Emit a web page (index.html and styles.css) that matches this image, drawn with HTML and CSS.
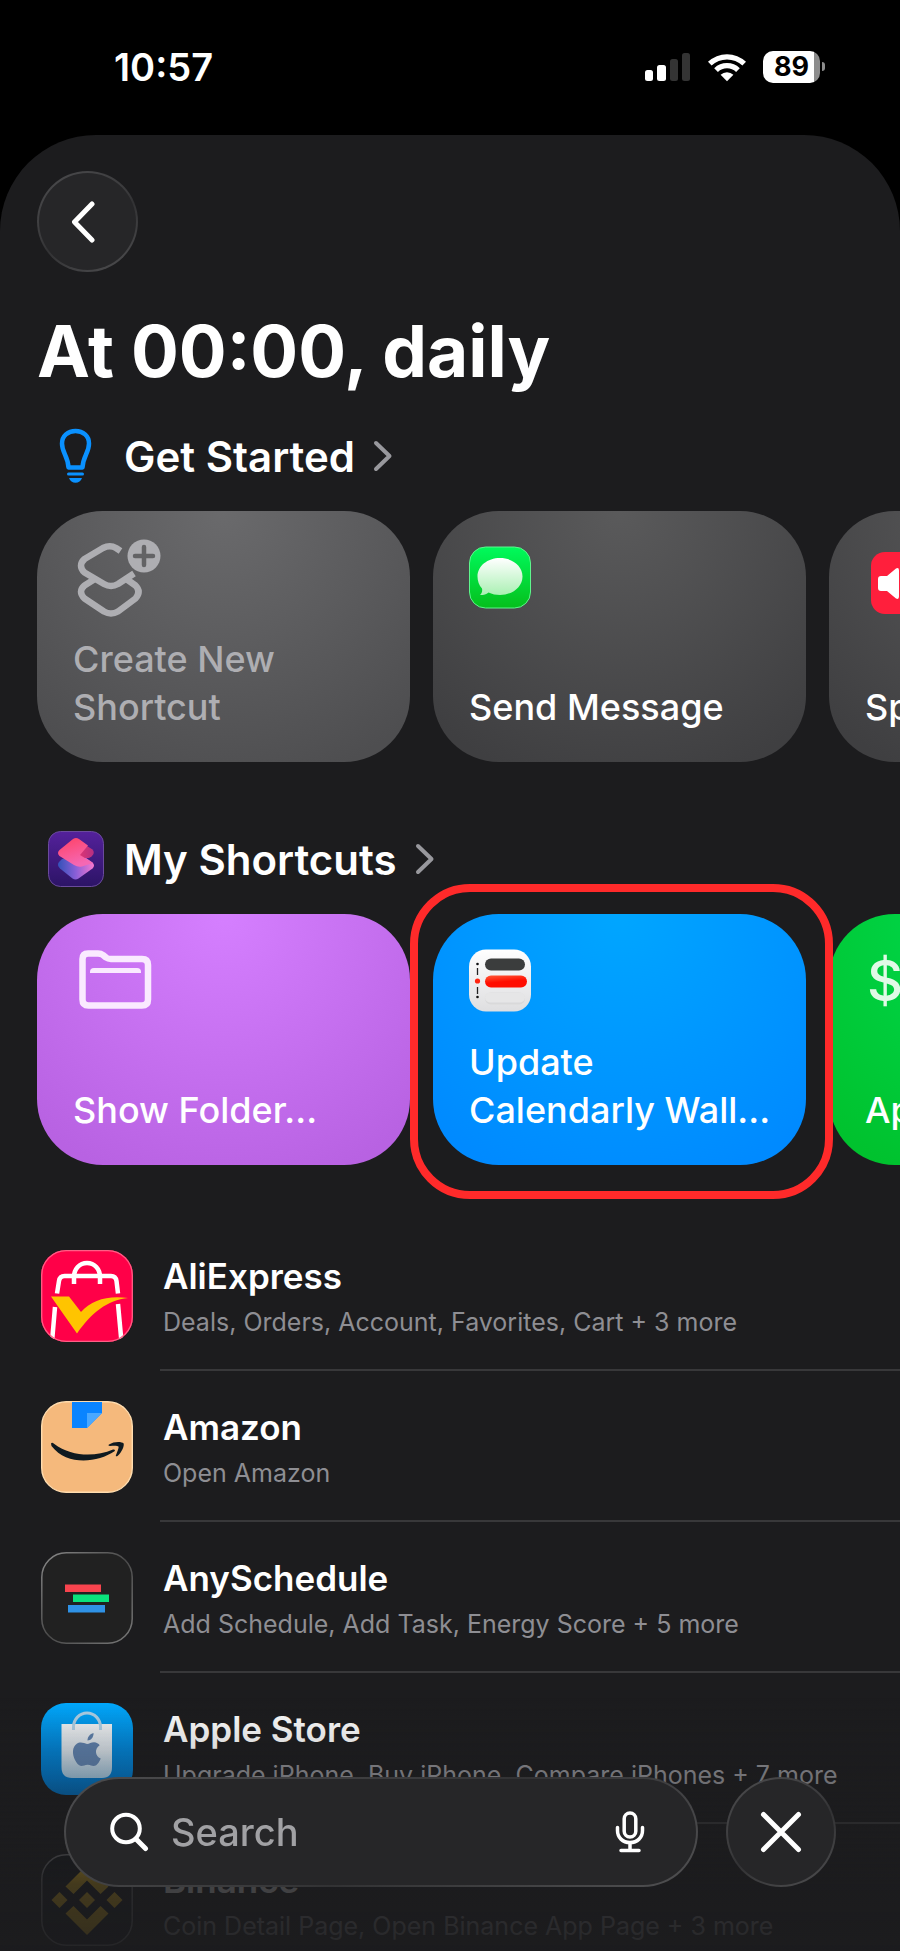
FILE: index.html
```html
<!DOCTYPE html>
<html lang="en">
<head>
<meta charset="utf-8">
<meta name="viewport" content="width=device-width, initial-scale=1">
<title>At 00:00, daily</title>
<link rel="stylesheet" href="styles.css">
</head>
<body>
<div class="phone">
  <header class="status">
    <time class="status-time">10:57</time>
    <div class="status-icons">
      <svg class="signal" width="46" height="30" viewBox="0 0 46 30" aria-hidden="true">
        <rect x="0" y="18" width="8" height="11" rx="2.5" fill="#fff"/>
        <rect x="12" y="13" width="9" height="16" rx="2.5" fill="#fff"/>
        <rect x="25" y="7" width="8" height="22" rx="2.5" fill="#343434"/>
        <rect x="37" y="1" width="8" height="28" rx="2.5" fill="#343434"/>
      </svg>
      <svg class="wifi" width="40" height="30" viewBox="0 0 40 30" aria-hidden="true">
        <path d="M1 9.8a27.4 27.4 0 0 1 38 0l-3.6 3.8a22.2 22.2 0 0 0-30.800 0z" fill="#fff"/>
        <path d="M7.200 16.200a18.600 18.600 0 0 1 25.600 0l-3.700 3.800a13.200 13.200 0 0 0-18.200 0z" fill="#fff"/>
        <path d="M13.600 22.700a9.400 9.400 0 0 1 12.800 0L20 29.300z" fill="#fff"/>
      </svg>
      <div class="battery"><span class="battery-level">89</span></div>
    </div>
  </header>

  <main class="sheet">
    <button class="glass round back" type="button" aria-label="Back">
      <svg width="26" height="42" viewBox="0 0 26 42" aria-hidden="true"><path d="M22 3 4.500 21 22 39" fill="none" stroke="#fff" stroke-width="5" stroke-linecap="round" stroke-linejoin="round"/></svg>
    </button>
    <h1 class="title">At 00:00, daily</h1>

    <section class="section">
      <h2 class="section-head">
        <span class="section-icon">
          <svg width="34" height="56" viewBox="0 0 34 56" aria-hidden="true">
            <path d="M9.500 39.500C9 28 3 25 3 15.500 3 8 9 3 16.500 3S30 8 30 15.500C30 25 24 28 23.500 39.500z" fill="none" stroke="#0a91ff" stroke-width="4.500" stroke-linejoin="round"/>
            <path d="M9.500 46h14" stroke="#0a91ff" stroke-width="3" stroke-linecap="round"/>
            <path d="M10 50h13c-1 3-3.500 4.700-6.500 4.700S11 53 10 50z" fill="#0a91ff"/>
          </svg>
        </span>
        Get Started
        <svg class="chevron" width="20" height="32" viewBox="0 0 20 32" aria-hidden="true"><path d="M3 3 16.500 16 3 29" fill="none" stroke="#98989d" stroke-width="4" stroke-linecap="round" stroke-linejoin="round"/></svg>
      </h2>
      <div class="shelf">
        <button class="card card-create" type="button">
          <svg class="card-art" width="140" height="80" viewBox="0 0 140 80" aria-hidden="true">
            <g fill="none" stroke="#aeaeb2" stroke-width="6.500" stroke-linejoin="round">
              <path d="M47.500 12 43 9q-6-3.500-13 0L11.500 20q-7 6.500 0 13.500L31 45q7 4 14 0L61 34.500"/>
              <path d="M21 40.500 11.500 46.500q-7 6 0 13L31 72.500q7 4 14 0L62.500 59.500q6-7 0-13L54 40.500"/>
            </g>
            <circle cx="71" cy="17" r="16.500" fill="#aeaeb2"/>
            <path d="M71 8v18M62 17h18" stroke="#636365" stroke-width="4.500" stroke-linecap="round"/>
          </svg>
          <span class="card-name">Create New Shortcut</span>
        </button>
        <button class="card card-gray" type="button">
          <svg class="card-art" width="140" height="80" viewBox="0 0 140 80" aria-hidden="true">
            <defs>
              <linearGradient id="msg" x1="0" y1="0" x2="0" y2="1"><stop offset="0" stop-color="#00fa5c"/><stop offset="1" stop-color="#05bf1c"/></linearGradient>
              <linearGradient id="bubble" x1="0" y1="0" x2="0" y2="1"><stop offset="0" stop-color="#fff"/><stop offset="1" stop-color="#aaf0b3"/></linearGradient>
            </defs>
            <rect x="0.500" y="8" width="61" height="61" rx="16" fill="url(#msg)" stroke="#5ff58d"/>
            <path d="M31 19c12.500 0 22.500 8 22.500 18.400S43.500 56 31 56c-4 0-8-.8-11.500-2.500-2.500 2-5 2.600-8.500 2.500 2-2 2.500-4 2-6.500-3-3.200-4.500-7.500-4.500-12C8.500 27 18.500 19 31 19z" fill="url(#bubble)"/>
          </svg>
          <span class="card-name">Send Message</span>
        </button>
        <button class="card card-gray" type="button">
          <svg class="card-art" width="140" height="80" viewBox="0 0 140 80" aria-hidden="true">
            <rect x="6" y="13" width="62" height="62" rx="14" fill="#ff1f3c"/>
            <path d="M16 37h6l9-7.500q3-1.500 3 2v26q0 3.500-3 2L22 52h-6q-3 0-3-3v-9q0-3 3-3z" fill="#fff"/>
            <path d="M42 35q8 9 0 18" fill="none" stroke="#fff" stroke-width="4" stroke-linecap="round"/>
          </svg>
          <span class="card-name">Speak Text</span>
        </button>
      </div>
    </section>

    <section class="section">
      <h2 class="section-head">
        <span class="section-icon">
          <svg width="56" height="56" viewBox="0 0 56 56" aria-hidden="true">
            <defs>
              <linearGradient id="scBg" x1="0" y1="0" x2="0" y2="1"><stop offset="0" stop-color="#54219b"/><stop offset="1" stop-color="#2c1466"/></linearGradient>
              <linearGradient id="scTop" x1="0" y1="0" x2="0.400" y2="1"><stop offset="0" stop-color="#ff4163"/><stop offset="1" stop-color="#f568b4"/></linearGradient>
              <linearGradient id="scLow" x1="0" y1="0.300" x2="1" y2="0.300"><stop offset="0" stop-color="#3351b8"/><stop offset="0.500" stop-color="#8a5fd8"/><stop offset="1" stop-color="#f878cf"/></linearGradient>
              <linearGradient id="scFold" x1="0" y1="0" x2="1" y2="0"><stop offset="0" stop-color="#f0386c"/><stop offset="1" stop-color="#b53082"/></linearGradient>
            </defs>
            <rect x="0.500" y="0.500" width="55" height="55" rx="12" fill="url(#scBg)" stroke="#6a4a9c"/>
            <path d="M14 28 11 31q-2.500 3 1 6.500L24.500 47.500q3 2 6 0L44.500 37.500q3-3 0-6L34 24z" fill="url(#scLow)"/>
            <path d="M28 8 44.500 18.500q3 3.500-1 7L41 27 24 27z" fill="url(#scFold)"/>
            <path d="M25 8q3-2 6 0l9 6.500L32 24l13 8-11 3.500q-4 1-8-1.500L11.500 25q-3-3 0-6z" fill="url(#scTop)"/>
          </svg>
        </span>
        My Shortcuts
        <svg class="chevron" width="20" height="32" viewBox="0 0 20 32" aria-hidden="true"><path d="M3 3 16.500 16 3 29" fill="none" stroke="#98989d" stroke-width="4" stroke-linecap="round" stroke-linejoin="round"/></svg>
      </h2>
      <div class="shelf">
        <button class="card card-purple" type="button">
          <svg class="card-art" width="140" height="80" viewBox="0 0 140 80" aria-hidden="true">
            <path d="M9.500 17q0-5.500 5.500-5.500h10q3 0 5 1.500l3 2.500q2 1.500 5 1.500h31q6 0 6 6v34.500q0 6-6 6H15.500q-6 0-6-6z" fill="none" stroke="#faeaff" stroke-width="6.500" stroke-linejoin="round"/>
            <path d="M17 31v-1q0-4 4-4h43q4 0 4 4v1z" fill="#faeaff"/>
          </svg>
          <span class="card-name">Show Folder...</span>
        </button>
        <button class="card card-blue highlighted" type="button">
          <svg class="card-art" width="140" height="80" viewBox="0 0 140 80" aria-hidden="true">
            <defs>
              <linearGradient id="cal" x1="0" y1="0" x2="0" y2="1"><stop offset="0" stop-color="#fff"/><stop offset="1" stop-color="#dedee0"/></linearGradient>
              <linearGradient id="calRed" x1="0" y1="0" x2="0.300" y2="1"><stop offset="0" stop-color="#ff5a38"/><stop offset="0.600" stop-color="#ff0d00"/></linearGradient>
            </defs>
            <rect x="0" y="7.500" width="62" height="62" rx="17" fill="url(#cal)"/>
            <rect x="16" y="16.500" width="40" height="12" rx="6" fill="#3b3d3d"/>
            <rect x="16" y="33.500" width="42" height="12" rx="6" fill="url(#calRed)"/>
            <rect x="16" y="50.500" width="40" height="12" rx="6" fill="#d9d9da"/>
            <rect x="16" y="50.500" width="40" height="10" rx="5" fill="#e6e6e7"/>
            <path d="M8.500 26v7M8.500 45v7" stroke="#222" stroke-width="1.300"/>
            <circle cx="8.500" cy="22" r="1.300" fill="#111"/><circle cx="8.500" cy="55" r="1.300" fill="#111"/>
            <circle cx="8.500" cy="39" r="2.600" fill="#ff2410"/>
          </svg>
          <span class="card-name">Update Calendarly Wall...</span>
        </button>
        <button class="card card-green" type="button">
          <svg class="card-art" width="140" height="80" viewBox="0 0 140 80" aria-hidden="true">
            <text class="dollar" x="2" y="59">$</text>
          </svg>
          <span class="card-name">Apple Pay</span>
        </button>
      </div>
    </section>

    <ul class="apps">
      <li><button class="app" type="button">
        <svg class="app-icon" viewBox="0 0 92 92" aria-hidden="true">
          <defs><clipPath id="mask"><rect width="92" height="92" rx="25"/></clipPath></defs>
          <g clip-path="url(#mask)">
            <rect width="92" height="92" fill="#ff0048"/>
            <g fill="none" stroke="#fff" stroke-width="4.500">
              <path d="M16 43.500 18 31q.8-5 5.500-5H70q4.700 0 5.500 5L77 43.500"/>
              <path d="M33 34v-7c0-8 5.500-14 13-14s13 6 13 14v7"/>
              <path d="M14 57 11 92M77 54l3.500 38"/>
            </g>
            <path d="M10 46.500h18L40 62C51 50 66 45.500 87 48 66 50.500 51 62 36 83.500z" fill="#ffc400"/>
          </g>
          <rect x="0.700" y="0.700" width="90.600" height="90.600" rx="24.500" fill="none" stroke="#ff5f86" stroke-width="1.300"/>
        </svg>
        <span class="app-text"><span class="app-name">AliExpress</span><span class="app-actions">Deals, Orders, Account, Favorites, Cart + 3 more</span></span>
      </button></li>
      <li><button class="app" type="button">
        <svg class="app-icon" viewBox="0 0 92 92" aria-hidden="true">
          <rect x="0.700" y="0.700" width="90.600" height="90.600" rx="24.500" fill="#f5b97c" stroke="#ffdcae" stroke-width="1.400"/>
          <path d="M31 1h30v11L46 27H31z" fill="#0a84ff"/>
          <path d="M46 12h15L46 27z" fill="#4aa8ff"/>
          <path d="M10 42.500q1-1.500 3 .2C31 56 54 56 72 48.500q3-.5 1.500 1.800C56 62 26 65 10.500 45z" fill="#0f1a20"/>
          <path d="M68 43.500c5-3.500 13-3 14.500-1.200 1.200 2-1.500 9-6 12.700-1.500.8-2 .2-1.500-1 1.500-3.500 3-7.500 2.500-8.500-1-1-5-.8-8.500-.5-1.500 0-2-.8-1-1.500z" fill="#0f1a20"/>
        </svg>
        <span class="app-text"><span class="app-name">Amazon</span><span class="app-actions">Open Amazon</span></span>
      </button></li>
      <li><button class="app" type="button">
        <svg class="app-icon" viewBox="0 0 92 92" aria-hidden="true">
          <defs><linearGradient id="rim" x1="0" y1="0" x2="1" y2="1"><stop offset="0" stop-color="#8a8a8a"/><stop offset="0.500" stop-color="#4a4a4a"/><stop offset="1" stop-color="#7a7a7a"/></linearGradient></defs>
          <rect x="0.800" y="0.800" width="90.400" height="90.400" rx="24.500" fill="#212121" stroke="url(#rim)" stroke-width="1.500"/>
          <rect x="24" y="32.500" width="36" height="7.500" fill="#f8444e"/>
          <rect x="32" y="42.500" width="36" height="7.500" fill="#0be27c"/>
          <rect x="27" y="53" width="37" height="7.500" fill="#2f92e6"/>
        </svg>
        <span class="app-text"><span class="app-name">AnySchedule</span><span class="app-actions">Add Schedule, Add Task, Energy Score + 5 more</span></span>
      </button></li>
      <li><button class="app" type="button">
        <svg class="app-icon" viewBox="0 0 92 92" aria-hidden="true">
          <defs>
            <linearGradient id="store" x1="0" y1="0" x2="0" y2="1"><stop offset="0" stop-color="#00aaff"/><stop offset="0.500" stop-color="#0084d6"/><stop offset="1" stop-color="#0068b4"/></linearGradient>
            <linearGradient id="bag" x1="0" y1="0" x2="0" y2="1"><stop offset="0" stop-color="#f1f3f5"/><stop offset="0.500" stop-color="#d6dfe6"/><stop offset="1" stop-color="#9cc0d8"/></linearGradient>
          </defs>
          <rect width="92" height="92" rx="25" fill="url(#store)"/>
          <path d="M20.500 21h50.500v43q0 11-10 11H31q-10.500 0-10.500-11z" fill="url(#bag)"/>
          <path d="M32.500 27v-3a13.500 14 0 0 1 27 0v3" fill="none" stroke="#aed0e6" stroke-width="3"/>
          <path d="M46 41c2.500 0 4-1.700 7-1.700 2.500 0 4.500 1.400 5.700 3-5.500 3.500-4.700 11 1 13.200-1.500 4-4.200 7.500-7 7.500-2.300 0-3-1.300-6-1.300s-4 1.300-6.200 1.300C35 63 27.500 47 35.500 41c3.500-3 7.500-1 10.500 0z" fill="#5e80ac"/>
          <path d="M46.500 37.500c0-4 2.500-6.500 6-7.500.3 4-2.500 7.500-6 7.500z" fill="#5e80ac"/>
        </svg>
        <span class="app-text"><span class="app-name">Apple Store</span><span class="app-actions">Upgrade iPhone, Buy iPhone, Compare iPhones + 7 more</span></span>
      </button></li>
      <li><button class="app" type="button">
        <svg class="app-icon" viewBox="0 0 92 92" aria-hidden="true">
          <rect x="0.800" y="0.800" width="90.400" height="90.400" rx="24.500" fill="#14171c" stroke="#77777a" stroke-width="1.500"/>
          <g fill="#ffc61a">
            <path d="M46 11 67.500 32.500 59.500 40 46 26.500 32.500 40 24.500 32.500z"/>
            <path d="M46 81 67.500 59.500 59.500 52 46 65.500 32.500 52 24.500 59.500z"/>
            <path d="M46 38 54 46 46 54 38 46zM18.500 38l8 8-8 8-8-8zM73.500 38l8 8-8 8-8-8z"/>
          </g>
        </svg>
        <span class="app-text"><span class="app-name">Binance</span><span class="app-actions">Coin Detail Page, Open Binance App Page + 3 more</span></span>
      </button></li>
    </ul>
  </main>

  <div class="dock">
    <div class="glass search">
      <svg width="40" height="40" viewBox="0 0 40 40" aria-hidden="true"><circle cx="16" cy="16.500" r="13.800" fill="none" stroke="#fff" stroke-width="4"/><path d="M26 27 35.500 36.500" stroke="#fff" stroke-width="5" stroke-linecap="round"/></svg>
      <input class="search-input" type="search" aria-label="Search" placeholder="Search">
      <button class="mic" type="button" aria-label="Dictate">
        <svg width="30" height="42" viewBox="0 0 30 42" aria-hidden="true"><g fill="none" stroke="#fff" stroke-width="3.500" stroke-linecap="round"><rect x="9.200" y="2" width="11.600" height="24" rx="5.800"/><path d="M2.500 16.500v3c0 7 5 12 12.500 12s12.500-5 12.500-12v-3M15 32v7M6 39.500h18"/></g></svg>
      </button>
    </div>
    <button class="glass round close" type="button" aria-label="Close">
      <svg width="42" height="42" viewBox="0 0 42 42" aria-hidden="true"><path d="M3.500 3.500l35 35M38.500 3.500l-35 35" stroke="#fff" stroke-width="5" stroke-linecap="round"/></svg>
    </button>
  </div>
</div>
</body>
</html>
```
FILE: styles.css
```css
* { box-sizing: border-box; }

body {
  margin: 0;
  background: #000;
  color: #fff;
  font-family: Inter, "Liberation Sans", sans-serif;
}

button {
  padding: 0;
  border: 0;
  background: none;
  color: inherit;
  font: inherit;
  text-align: left;
}

svg { display: block; flex: none; }

.phone {
  position: relative;
  display: flex;
  flex-direction: column;
  height: 100vh;
  overflow: hidden;
}

/* Status bar */
.status {
  display: flex;
  flex: none;
  align-items: flex-start;
  justify-content: space-between;
  height: 135px;
  padding: 47px 75px 0 114px;
}
.status-time { font-size: 38px; font-weight: 600; line-height: 40px; }
.status-icons { display: flex; align-items: center; height: 40px; }
.wifi { margin: 0 16px; }
.battery {
  position: relative;
  width: 57px;
  height: 32px;
  margin-right: 5px;
  border-radius: 10px;
  background: linear-gradient(90deg, #fff 90%, #8c8c8c 90%);
  color: #000;
}
.battery::after {
  content: "";
  position: absolute;
  top: 11px;
  right: -5px;
  width: 3px;
  height: 9px;
  border-radius: 0 4px 4px 0;
  background: #8c8c8c;
}
.battery-level {
  display: block;
  font-size: 27px;
  font-weight: 700;
  line-height: 32px;
  text-align: center;
}

/* Sheet */
.sheet {
  flex: 1;
  min-height: 0;
  padding-top: 36px;
  overflow-x: hidden;
  overflow-y: auto;
  scrollbar-width: none;
  border-radius: 96px 96px 0 0;
  background: #1c1c1e;
}
.glass {
  border: 2px solid transparent;
  background:
    linear-gradient(#262628, #262628) padding-box,
    linear-gradient(150deg, #4c4c4e, #3a3a3c 45%, #323234 55%, #505052) border-box;
}
.round {
  display: flex;
  align-items: center;
  justify-content: center;
  border-radius: 50%;
}
.back { width: 101px; height: 101px; margin-left: 37px; padding-right: 10px; }
.title {
  margin: 35px 37px 33px;
  font-size: 71px;
  font-weight: 700;
  line-height: 88px;
}

/* Sections */
.section { margin-bottom: 69px; }
.section:last-of-type { margin-bottom: 55px; }
.section-head {
  display: flex;
  align-items: center;
  height: 56px;
  margin: 0 0 27px;
  padding-left: 48px;
  font-size: 42px;
  font-weight: 600;
}
.section-icon {
  display: flex;
  justify-content: center;
  width: 56px;
  margin-right: 20px;
}
.chevron { margin-left: 18px; }

/* The vertical padding keeps the highlight ring inside the scroll area. */
.shelf {
  display: flex;
  gap: 23px;
  margin: -40px 0;
  padding: 40px 37px;
  overflow-x: auto;
  scrollbar-width: none;
}
.card {
  position: relative;
  display: flex;
  flex: none;
  flex-direction: column;
  justify-content: space-between;
  width: 373px;
  height: 251px;
  padding: 28px 24px 31px 36px;
  border-radius: 66px;
}
.card-name { font-size: 36px; font-weight: 500; line-height: 48px; }
.card-create { background: radial-gradient(circle at 50% 0, #6a6a6c, #4e4e50 280px); }
.card-create .card-name { width: 240px; color: #aeaeb2; }
.card-gray { background: radial-gradient(circle at 50% 0, #5a5a5b, #3f3f41 280px); }
.card-purple { background: radial-gradient(circle at 50% 0, #d57fff, #b862e2 280px); }
.card-blue { background: radial-gradient(circle at 50% 0, #00a6ff, #008aff 280px); }
.card-green { background: radial-gradient(circle at 50% 0, #00dc50, #00c22e 280px); }
.highlighted { z-index: 1; }
.highlighted::after {
  content: "";
  position: absolute;
  inset: -30px -27px -34px -23px;
  border: 8px solid #ff2a2a;
  border-radius: 60px;
}
.dollar { fill: #e0fae6; font-size: 56px; font-weight: 500; }

/* Apps */
.apps { margin: 0; padding: 0; list-style: none; }
.app {
  display: flex;
  gap: 27px;
  width: 100%;
  height: 151px;
  padding-left: 41px;
}
.app-icon { width: 92px; height: 92px; margin-top: 30px; }
.app-text {
  display: flex;
  flex: 1;
  flex-direction: column;
  gap: 6px;
  height: 151px;
  padding: 34px 0 0 3px;
  border-bottom: 2px solid #38383a;
  white-space: nowrap;
}
.app-name { font-size: 35px; font-weight: 600; line-height: 44px; }
.app-actions { color: #8e8e93; font-size: 25px; line-height: 36px; }

/* Search dock with the fade behind it */
.dock {
  position: absolute;
  right: 0;
  bottom: 0;
  left: 0;
  display: flex;
  gap: 28px;
  padding: 80px 64px 64px;
  background: linear-gradient(#1c1c1e00, #1c1c1e40 32%, #1c1c1ed4 74%, #1c1c1ee6);
}
.search {
  display: flex;
  flex: 1;
  align-items: center;
  min-width: 0;
  height: 110px;
  padding: 0 51px 0 44px;
  border-radius: 55px;
}
.search-input {
  flex: 1;
  min-width: 0;
  height: 60px;
  margin-left: 21px;
  padding: 0;
  border: 0;
  outline: 0;
  background: none;
  color: #fff;
  font: 500 38px/60px Inter, "Liberation Sans", sans-serif;
}
.search-input::placeholder { color: #a1a1a4; opacity: 1; }
.close { width: 110px; height: 110px; }
```
